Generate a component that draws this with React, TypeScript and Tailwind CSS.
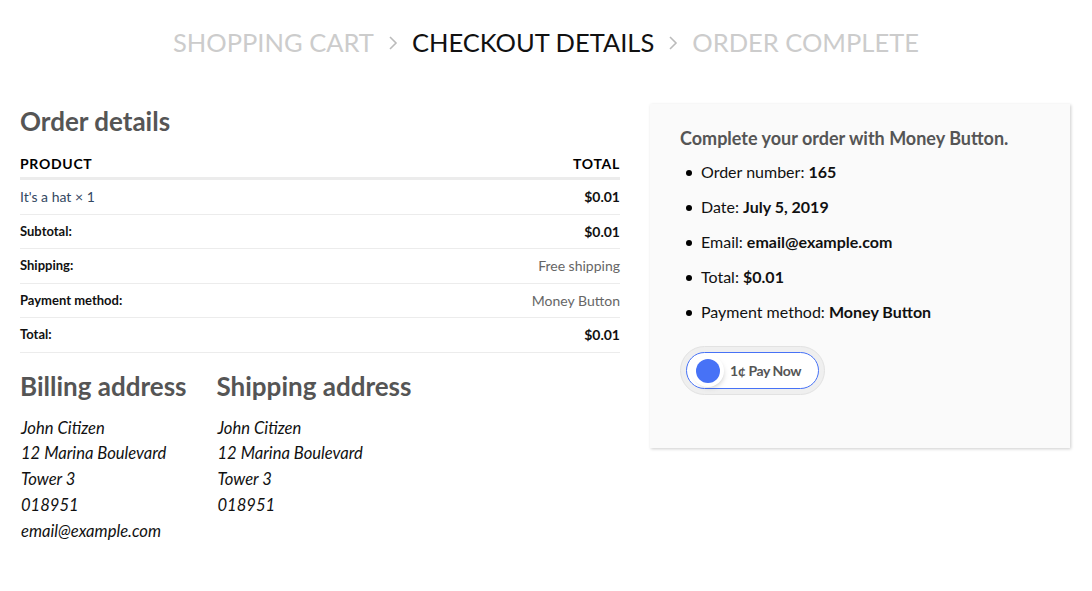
export default function App() {
  const rows: { label: string; value: string; strong?: boolean }[] = [
    { label: "Subtotal:", value: "$0.01", strong: true },
    { label: "Shipping:", value: "Free shipping" },
    { label: "Payment method:", value: "Money Button" },
    { label: "Total:", value: "$0.01", strong: true },
  ];

  const address = ["John Citizen", "12 Marina Boulevard", "Tower 3", "018951"];

  const details: [string, string][] = [
    ["Order number:", "165"],
    ["Date:", "July 5, 2019"],
    ["Email:", "email@example.com"],
    ["Total:", "$0.01"],
    ["Payment method:", "Money Button"],
  ];

  return (
    <div className="min-h-screen bg-white font-['Lato',_'Noto_Sans',sans-serif] text-[#777]">
      {/* Breadcrumb */}
      <nav className="flex items-center justify-center gap-[14px] pt-[25px] text-[25.5px] uppercase leading-[34px]">
        <span className="text-[#ccc]">Shopping Cart</span>
        <Chevron />
        <span className="text-[#111]">Checkout Details</span>
        <Chevron />
        <span className="text-[#ccc]">Order Complete</span>
      </nav>

      <div className="flex gap-[30px] px-[20px] pt-[44px]">
        {/* Left column */}
        <div className="w-[600px]">
          <h2 className="text-[26px] font-bold leading-[36px] text-[#555]">Order details</h2>

          <div className="mt-[15px]">
            <div className="flex items-center justify-between border-b-[3px] border-[#ececec] pb-[3px] text-[14px] font-bold uppercase leading-[20px] tracking-[0.05em] text-black">
              <span>Product</span>
              <span>Total</span>
            </div>
            <div className="flex h-[34.5px] items-center justify-between border-b border-[#ececec] text-[14px]">
              <span className="text-[#334862]">It's a hat × 1</span>
              <span className="font-bold text-[#111]">$0.01</span>
            </div>
            {rows.map((r) => (
              <div
                key={r.label}
                className="flex h-[34.5px] items-center justify-between border-b border-[#ececec] text-[13px]"
              >
                <span className="font-bold text-[#111]">{r.label}</span>
                <span
                  className={
                    r.strong ? "text-[14px] font-bold text-[#111]" : "text-[14px] text-[#666]"
                  }
                >
                  {r.value}
                </span>
              </div>
            ))}
          </div>

          <div className="mt-[16px] flex gap-[30px]">
            <div>
              <h2 className="text-[26px] font-bold leading-[34px] text-[#555]">Billing address</h2>
              <address className="mt-[13px] pl-[1px] text-[16.6px] italic leading-[25.8px] text-[#111]">
                {address.map((l) => (
                  <div key={l}>{l}</div>
                ))}
                <div>email@example.com</div>
              </address>
            </div>
            <div>
              <h2 className="text-[26px] font-bold leading-[34px] text-[#555]">Shipping address</h2>
              <address className="mt-[13px] pl-[1px] text-[16.6px] italic leading-[25.8px] text-[#111]">
                {address.map((l) => (
                  <div key={l}>{l}</div>
                ))}
              </address>
            </div>
          </div>
        </div>

        {/* Right box */}
        <div className="mt-[1px] h-[344px] w-[420px] bg-[#fafafa] px-[30px] pt-[22px] shadow-[1px_1px_3px_rgba(0,0,0,0.2)]">
          <h3 className="text-[18px] font-bold leading-[24px] text-[#555]">
            Complete your order with Money Button.
          </h3>
          <ul className="mt-[12px] pl-[21px] text-[16px] leading-[20px] text-[#111]">
            {details.map(([k, v]) => (
              <li key={k} className="relative mb-[15px] list-none">
                <span className="absolute left-[-15px] top-[7.5px] h-[6px] w-[6px] rounded-full bg-black" />
                {k} <strong className="font-bold">{v}</strong>
              </li>
            ))}
          </ul>

          <div className="mt-[9px] inline-flex rounded-full border border-[#e2e2e2] bg-[#efefef] p-[5px]">
            <button className="flex h-[37px] w-[133px] items-center rounded-full border border-[#4772f6] bg-white pl-[9px]">
              <span className="h-[24px] w-[24px] rounded-full bg-[#4772f6] shadow-[0_0_0_4px_#fff,2px_3px_6px_rgba(0,0,0,0.35)]" />
              <span className="ml-[10px] text-[14px] font-bold tracking-[-0.03em] text-[#555]">
                1¢ Pay Now
              </span>
            </button>
          </div>
        </div>
      </div>
    </div>
  );
}

function Chevron() {
  return (
    <svg width="10" height="16" viewBox="0 0 10 16" className="mt-[2px]" fill="none">
      <path d="M2 2l6 6-6 6" stroke="#bbb" strokeWidth="1.6" />
    </svg>
  );
}
